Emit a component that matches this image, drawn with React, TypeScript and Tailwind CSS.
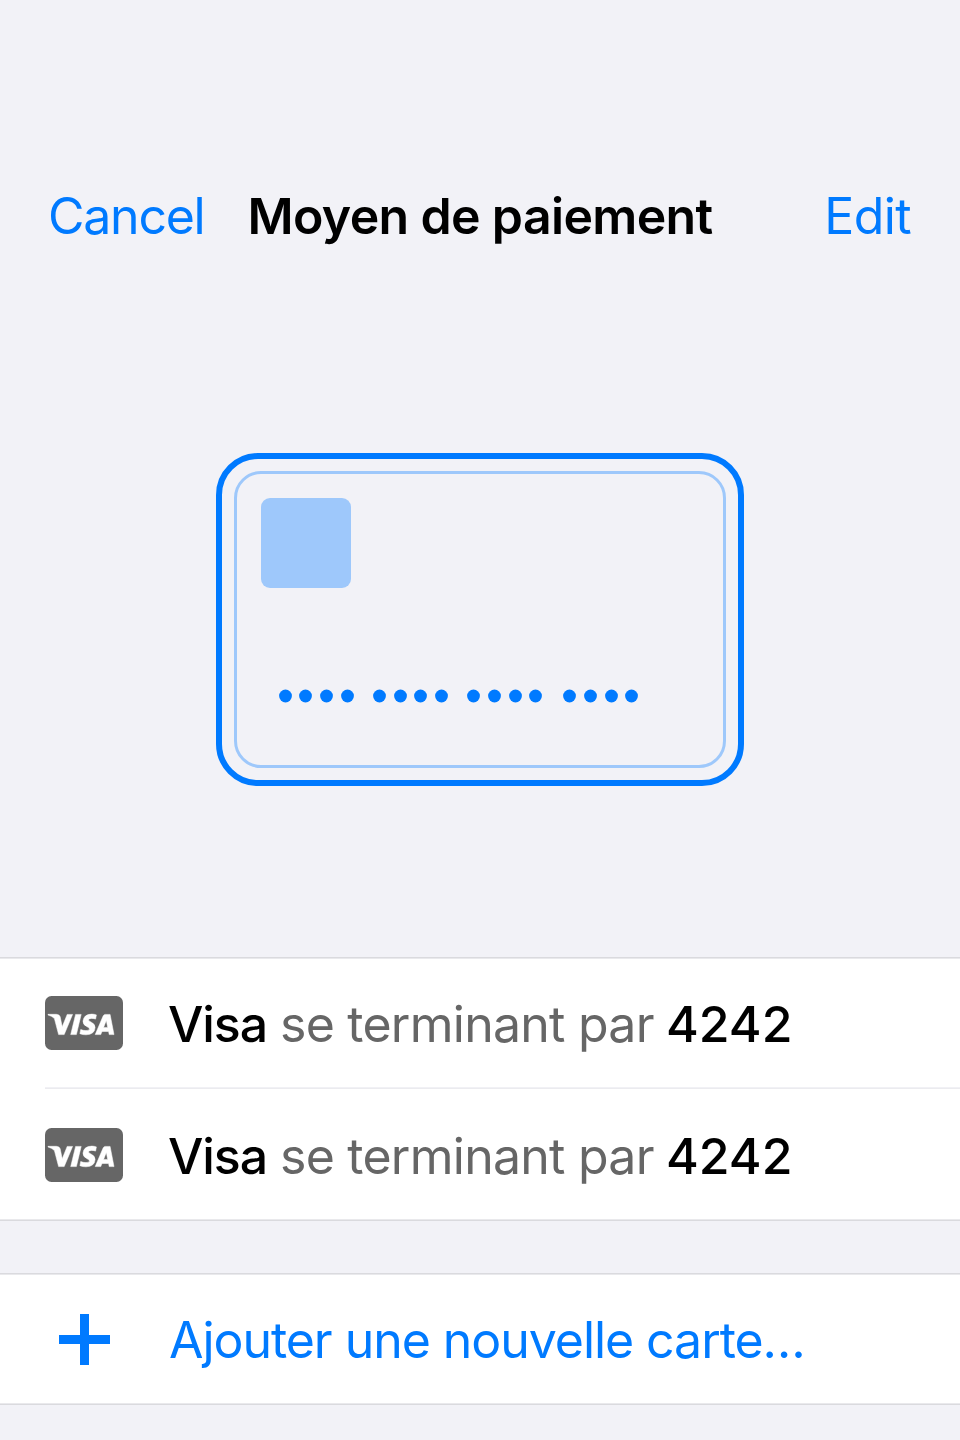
import React from 'react';

function VisaIcon() {
  return (
    <svg width="78" height="54" viewBox="0 0 78 54" className="block shrink-0">
      <rect width="78" height="54" rx="6.5" fill="#666666" />
      <g fill="#ffffff" stroke="#ffffff" strokeWidth="0.5">
        <path d="M3 18.3H11.4Q14.6 18.5 15.2 20.8L17.2 30.8L22.2 18.4H27.6L19.2 38.6H13.6L9.4 22.6Q7.4 20.2 3 19Z" />
        <path d="M30.6 18.4H36.2L31.4 38.6H25.7Z" />
        <path d="M51.4 18.9L50.6 23.1Q48.7 22.4 46.6 22.4Q43.5 22.5 43.4 23.9Q43.5 24.8 46.3 26.2Q50.2 28 50.1 31.6Q49.7 38.5 41 38.8Q37.3 38.8 34.9 37.7L35.7 33.5Q38.2 34.6 40.9 34.6Q44.4 34.5 44.5 32.9Q44.5 31.9 41.8 30.6Q37.8 28.6 38 25.1Q38.7 18.3 46.8 18.1Q49.4 18.1 51.4 18.9Z" />
        <path fillRule="evenodd" d="M60.2 18.4H65.1L69 38.6H64.2L63.6 35.5H57L55.8 38.6H50.2L58.1 20Q58.8 18.5 60.2 18.4ZM61.3 24.4L58.6 31.4H62.7Z" />
      </g>
    </svg>
  );
}

function CardRow({ divided = false }: { divided?: boolean }) {
  return (
    <div className={divided ? 'flex h-[132px] items-center shadow-[inset_0_-1px_#ebebef,inset_0_-2px_#f1f1f5]' : 'flex h-[132px] items-center'}>
      <VisaIcon />
      <p className="ml-[45px] flex whitespace-pre pt-[2px] text-[50px] leading-[60px] text-[#666666]">
        <span className="w-[112px] font-medium tracking-[-1.1px] text-black">Visa </span>
        <span className="w-[386px] tracking-[-0.75px]">se terminant par </span>
        <span className="font-medium tracking-[0px] text-black">4242</span>
      </p>
    </div>
  );
}

export default function App() {
  return (
    <main className="flex h-[1440px] w-[960px] flex-col overflow-hidden bg-[#f2f2f7] font-['Inter',sans-serif]">
      <header className="mt-[186px] grid h-[60px] grid-cols-[200px_1fr_200px] items-center text-[50px] leading-[60px]">
        <button className="pl-[48px] text-left tracking-[-1.25px] text-[#007aff]">Cancel</button>
        <h1 className="whitespace-nowrap text-center font-semibold tracking-[-0.65px]">Moyen de paiement</h1>
        <button className="pr-[49px] text-right tracking-[-0.6px] text-[#007aff]">Edit</button>
      </header>
      <svg className="mx-auto mt-[207px] shrink-0" width="528" height="333" viewBox="0 0 528 333" fill="none">
        <rect x="3" y="3" width="522" height="327" rx="39" stroke="#007aff" strokeWidth="6" />
        <rect x="19.5" y="19.5" width="489" height="294" rx="25.5" stroke="#9ec8fb" strokeWidth="3" />
        <rect x="45" y="45" width="90" height="90" rx="9" fill="#9ec8fb" />
        <g fill="#007aff">
          {[69.5, 89.5, 110.5, 131.5, 163.5, 184.5, 204.5, 225.5, 257.5, 278.5, 299.5, 319.5, 353.5, 374.5, 395.5, 415.5].map((x) => (
            <circle key={x} cx={x} cy="243" r="6.4" />
          ))}
        </g>
      </svg>
      <section className="mt-[171px] h-[264px] shrink-0 bg-white pl-[45px] shadow-[inset_0_1px_#dadade,inset_0_2px_#e9e9ec,inset_0_-1px_#dadade,inset_0_-2px_#e9e9ec]">
        <CardRow divided />
        <CardRow />
      </section>
      <section className="mt-[52px] flex h-[132px] shrink-0 items-center bg-white pl-[59px] shadow-[inset_0_1px_#dadade,inset_0_2px_#e9e9ec,inset_0_-1px_#dadade,inset_0_-2px_#e9e9ec]">
        <svg width="51" height="51" viewBox="0 0 51 51" className="mt-px shrink-0"><path d="M25.5 0V51M0 25.5H51" stroke="#007aff" strokeWidth="9" /></svg>
        <button className="ml-[59px] whitespace-nowrap pt-[2px] text-[50px] leading-[60px] tracking-[-1.05px] text-[#007aff]">Ajouter une nouvelle carte…</button>
      </section>
    </main>
  );
}
